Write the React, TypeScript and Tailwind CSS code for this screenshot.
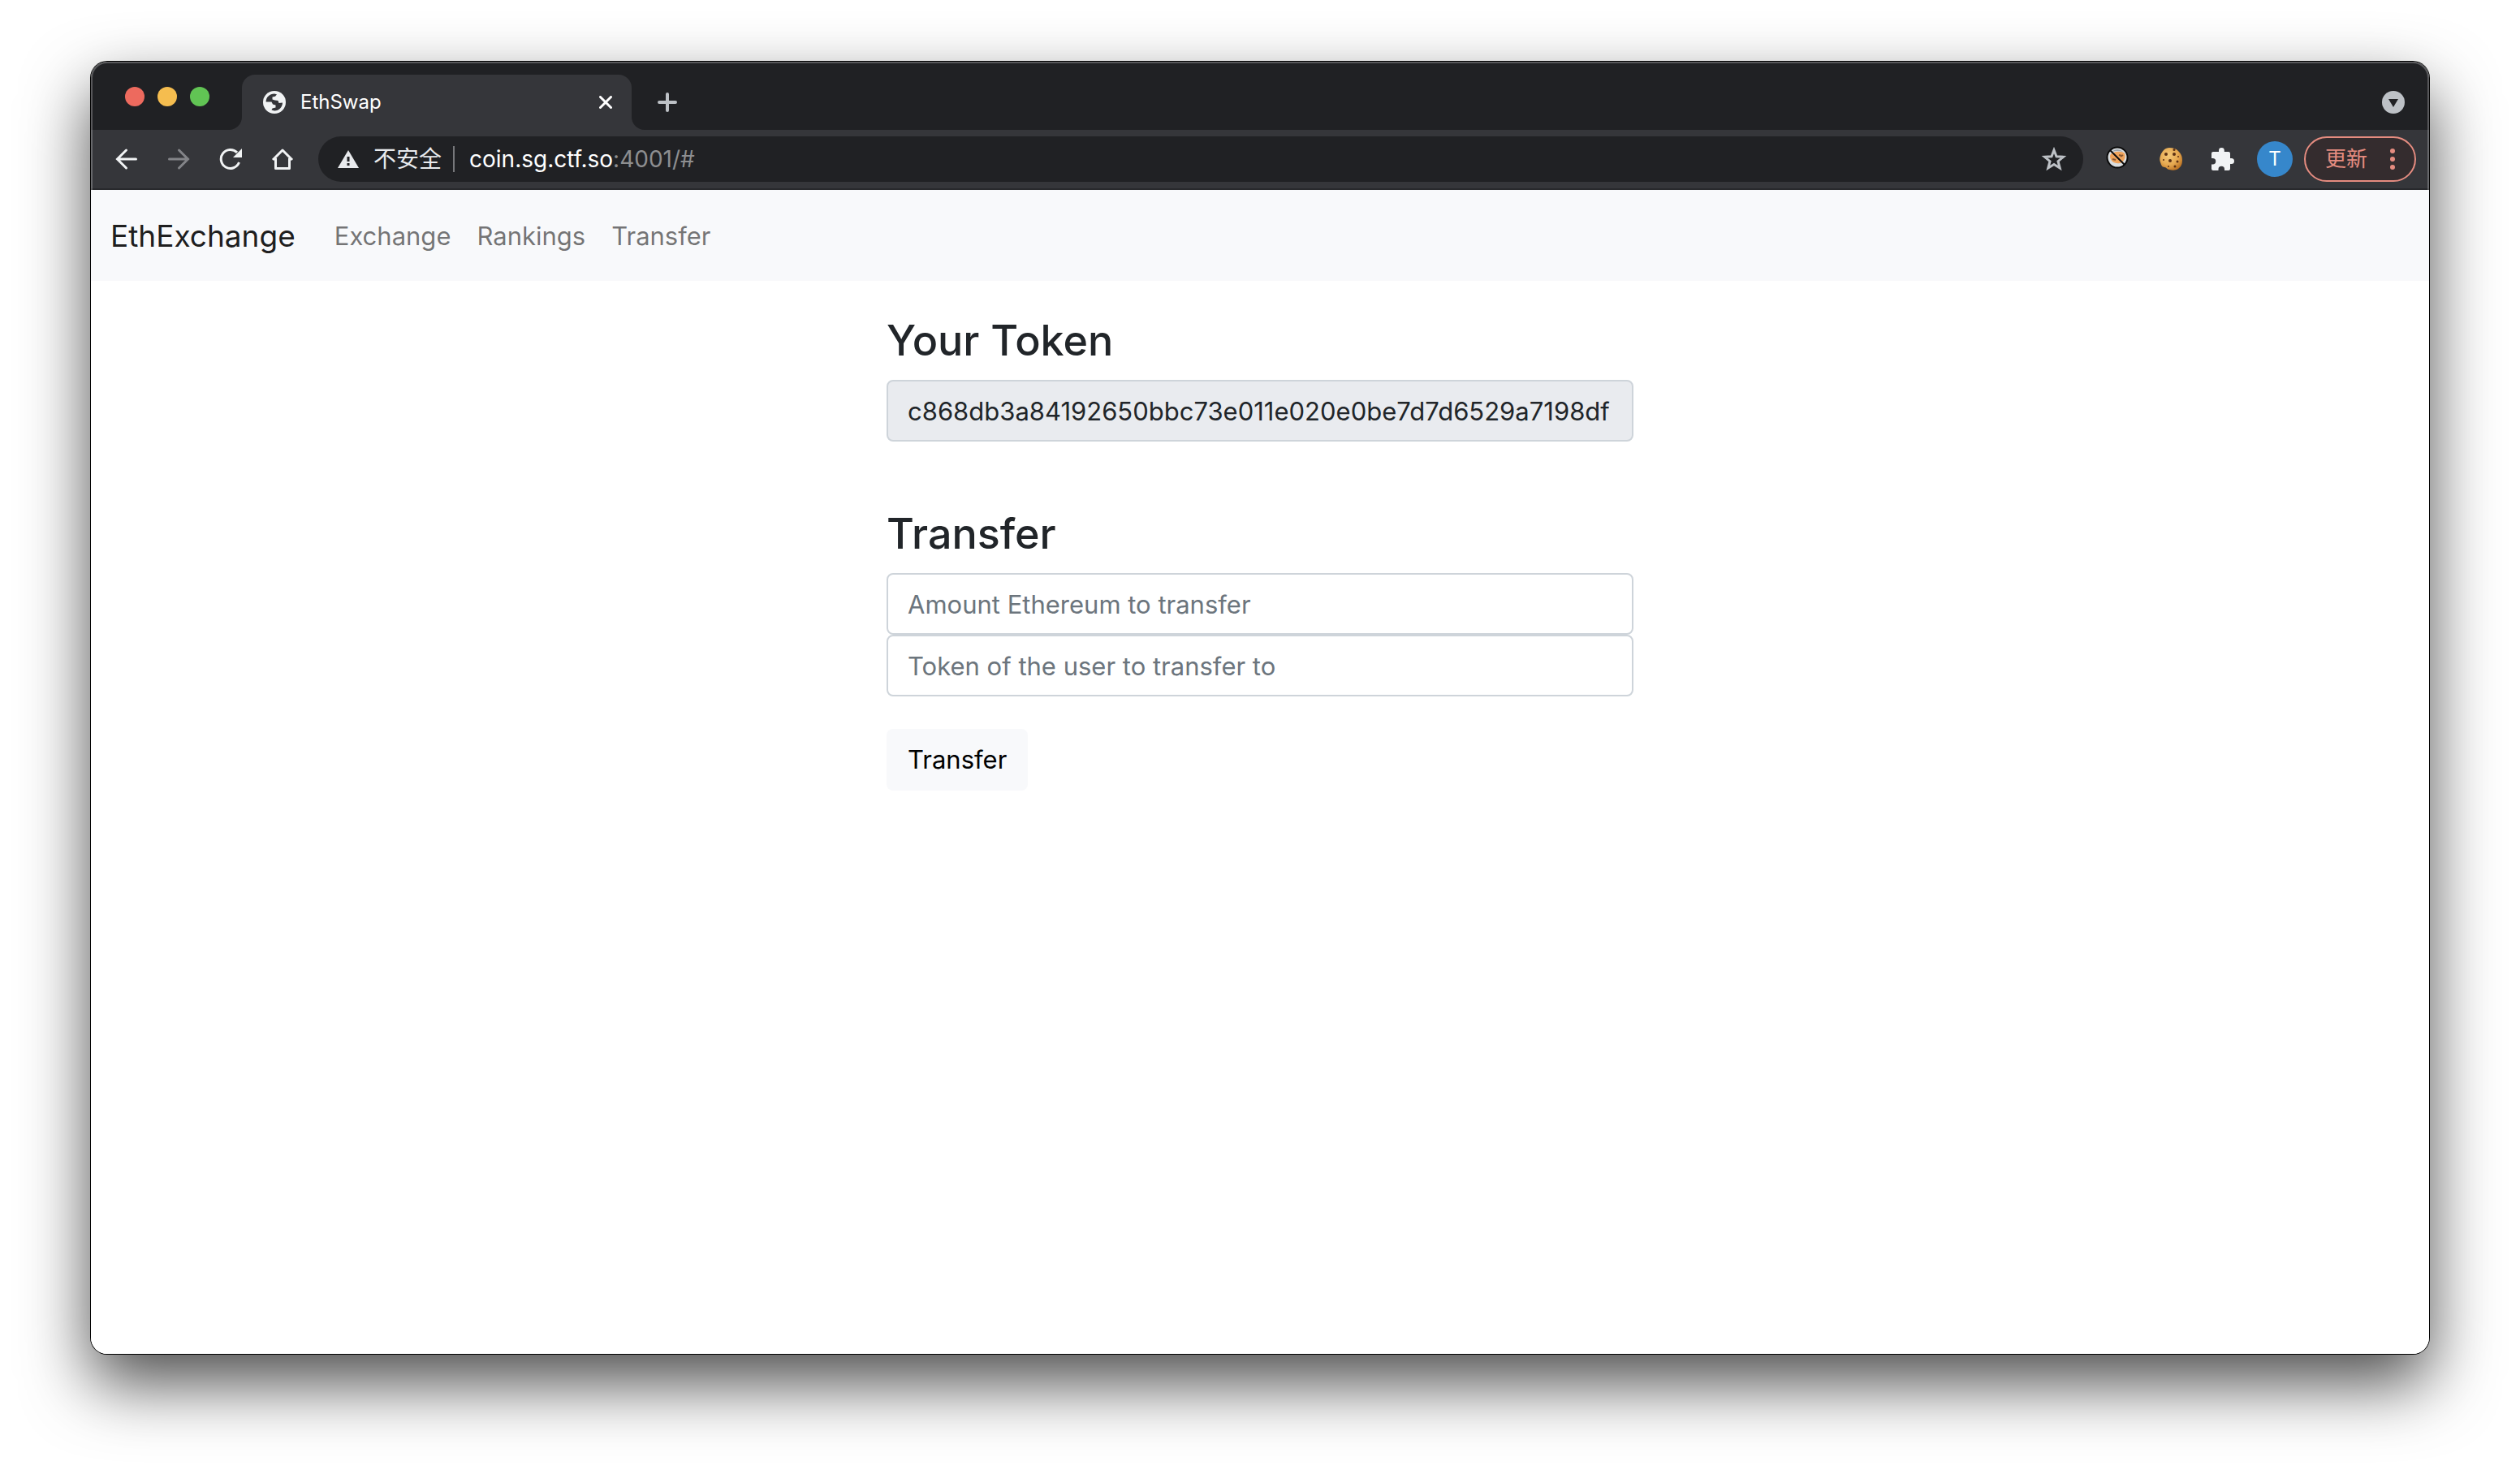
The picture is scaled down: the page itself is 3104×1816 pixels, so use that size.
import type { ReactNode } from "react";

const ui = "font-['Inter','Noto_Sans_CJK_SC',sans-serif]";

function IconButton({ label, className = "", children }: { label: string; className?: string; children: ReactNode }) {
  return (
    <button aria-label={label} className={`flex shrink-0 items-center justify-center ${className}`}>
      {children}
    </button>
  );
}

function Globe() {
  return (
    <svg viewBox="0 0 28 28" className="size-7 shrink-0" aria-hidden="true">
      <circle cx="14" cy="14" r="14" fill="#f1f3f4" />
      <path
        d="M3.600 13.500C3.600 8 8 3.600 14 3.600L17 4.200L15 6.800L11.500 7.500V10.500L14.500 11.500L18.500 12L19.500 15L24 14.500C24 20 19.800 24.400 14 24.400L10.500 23.600L11.500 21.500L15.500 20.500V17.500L12 16.500L10.500 13.500Z"
        fill="#35363a"
      />
    </svg>
  );
}

function TabStrip() {
  return (
    <div className="flex h-[84px] items-end bg-[#202124]">
      <div className="flex h-full items-center gap-4 pt-[2px] pr-6 pl-[42px]">
        <button aria-label="Close window" className="size-6 rounded-full bg-[#ed6a5e]" />
        <button aria-label="Minimize window" className="size-6 rounded-full bg-[#f5bd4f]" />
        <button aria-label="Zoom window" className="size-6 rounded-full bg-[#61c454]" />
      </div>
      <svg viewBox="0 0 16 16" className="size-4 shrink-0 text-[#35363a]" aria-hidden="true">
        <path d="M16 0A16 16 0 0 1 0 16H16Z" fill="currentColor" />
      </svg>
      <div className="flex h-[68px] w-[480px] items-center rounded-t-2xl bg-[#35363a] pr-4 pl-[26px]">
        <Globe />
        <span className="ml-[18px] grow text-[24px] leading-8 text-white">EthSwap</span>
        <IconButton label="Close tab" className="size-8">
          <svg viewBox="0 0 16 16" className="size-4" fill="none" stroke="#fff" strokeWidth="3" strokeLinecap="round" aria-hidden="true">
            <path d="M1.500 1.500L14.500 14.500M14.500 1.500L1.500 14.500" />
          </svg>
        </IconButton>
      </div>
      <svg viewBox="0 0 16 16" className="size-4 shrink-0 text-[#35363a]" aria-hidden="true">
        <path d="M0 0A16 16 0 0 0 16 16H0Z" fill="currentColor" />
      </svg>
      <IconButton label="New tab" className="ml-2 h-[68px] w-10">
        <svg viewBox="0 0 24 24" className="size-6" fill="none" stroke="#bdc1c6" strokeWidth="4" strokeLinecap="round" aria-hidden="true">
          <path d="M12 2V22M2 12H22" />
        </svg>
      </IconButton>
      <IconButton label="Search tabs" className="mr-[30px] ml-auto h-[68px] w-7">
        <svg viewBox="0 0 28 28" className="size-7" aria-hidden="true">
          <circle cx="14" cy="14" r="14" fill="#bdc1c6" />
          <path d="M8 10H20L14 20Z" fill="#202124" />
        </svg>
      </IconButton>
    </div>
  );
}

function BlockedIcon() {
  return (
    <svg viewBox="0 0 28 28" className="size-7" aria-hidden="true">
      <circle cx="14" cy="14" r="12.500" fill="#d9dde0" stroke="#0b0b0b" strokeWidth="2" />
      <path d="M5 12C6 7 19 5 23 9C25 14 22 20 17 21C11 22 5 19 5 12Z" fill="#f0a45c" />
      <path d="M7 7Q14 1 21 7Q14 5 7 7Z" fill="#9aa3ab" />
      <path d="M8 16L12 17M16 11L20 12M18 13L21 11" stroke="#8a5a33" strokeWidth="2" />
      <path d="M5 5L23 23" stroke="#0b0b0b" strokeWidth="2" />
    </svg>
  );
}

function CookieIcon() {
  return (
    <svg viewBox="0 0 28 28" className="size-7" aria-hidden="true">
      <defs>
        <radialGradient id="dough" cx="0.4" cy="0.35" r="0.7">
          <stop offset="0" stopColor="#f3c877" />
          <stop offset="0.600" stopColor="#e5a850" />
          <stop offset="1" stopColor="#bd7424" />
        </radialGradient>
      </defs>
      <path d="M12 0C17 0 20 1 23 4C27 8 28 11 28 15C28 20 27 23 23 26C20 28 16 28 12 27C9 27 9 24 6 24C3 24 2 21 1 18C0 15 0 13 1 10C3 4 7 0 12 0Z" fill="url(#dough)" />
      <g fill="#5c3013">
        <circle cx="8" cy="8" r="2" />
        <circle cx="18" cy="8" r="2" />
        <circle cx="13" cy="16" r="2" />
        <circle cx="22" cy="17" r="1.500" />
        <circle cx="23" cy="11" r="1" />
        <circle cx="19" cy="23" r="1.500" />
        <circle cx="5" cy="15" r="1" />
        <circle cx="11" cy="23" r="1" />
        <circle cx="18" cy="2.500" r="1.500" />
      </g>
    </svg>
  );
}

function Toolbar() {
  return (
    <div className="flex h-[74px] items-center border-b-2 border-[#28292c] bg-[#35363a] pr-4 pl-5">
      <div className="flex items-center gap-4 text-[#f1f3f4]">
        <IconButton label="Back" className="size-12">
          <svg viewBox="0 0 28 28" className="size-7" fill="none" stroke="currentColor" strokeWidth="3" strokeLinecap="round" aria-hidden="true">
            <path d="M25.500 14H3M13.500 3L2.500 14L13.500 25" />
          </svg>
        </IconButton>
        <IconButton label="Forward" className="size-12 text-[#838488]">
          <svg viewBox="0 0 28 28" className="size-7" fill="none" stroke="currentColor" strokeWidth="3" strokeLinecap="round" aria-hidden="true">
            <path d="M2.500 14H25M14.500 3L25.500 14L14.500 25" />
          </svg>
        </IconButton>
        <IconButton label="Reload" className="size-12">
          <svg viewBox="0 0 28 28" className="size-7" aria-hidden="true">
            <path d="M24.500 18A11.500 11.500 0 1 1 22 5.900" fill="none" stroke="currentColor" strokeWidth="3" />
            <path d="M28 1V12H17Z" fill="currentColor" />
          </svg>
        </IconButton>
        <IconButton label="Home" className="size-12">
          <svg viewBox="0 0 28 28" className="size-7" fill="none" stroke="currentColor" strokeWidth="3" strokeLinejoin="round" aria-hidden="true">
            <path d="M2 15L14 3L26 15M5.500 13V25.500H22.500V13" />
          </svg>
        </IconButton>
      </div>
      <div className="ml-5 flex h-14 min-w-0 grow items-center rounded-full bg-[#202124] pr-5 pl-6">
        <svg viewBox="0 0 26 22" className="h-[22px] w-[26px] shrink-0" aria-hidden="true">
          <path d="M13 0L26 22H0Z" fill="#e8eaed" />
          <path d="M11.500 8H14.500V14H11.500ZM11.500 16H14.500V19H11.500Z" fill="#202124" />
        </svg>
        <span className="ml-[18px] text-[28px] leading-9 text-[#e8eaed]">不安全</span>
        <span className="ml-[14px] h-8 w-[2px] bg-[#77787b]" />
        <a href="#" className="ml-[18px] grow text-[28px] leading-9 text-white">
          coin.sg.ctf.so<span className="text-[#8d8e90]">:4001/#</span>
        </a>
        <IconButton label="Bookmark this tab" className="size-8">
          <svg viewBox="0 0 32 32" className="size-8" fill="none" stroke="#bdc1c6" strokeWidth="3" aria-hidden="true">
            <path d="M16 5L19 12.700L27.500 13.300L21 18.700L23.200 27L16 22.500L8.800 27L11 18.700L4.500 13.300L13 12.700Z" />
          </svg>
        </IconButton>
      </div>
      <div className="ml-4 flex items-center gap-[14px]">
        <div className="mr-1 flex items-center gap-4">
          <IconButton label="Blocker extension" className="h-12 w-[52px] pb-1"><BlockedIcon /></IconButton>
          <IconButton label="Cookie extension" className="size-12"><CookieIcon /></IconButton>
          <IconButton label="Extensions" className="size-12">
            <svg viewBox="0 0 28 28" className="size-7" fill="#f1f3f4" aria-hidden="true">
              <path d="M2 5H9V3.500A3.400 3.400 0 0 1 15.800 3.500V5H21A2 2 0 0 1 23 7V13H24.500A3.400 3.400 0 0 1 24.500 20H23V26A2 2 0 0 1 21 28H16V26.500A3.600 3.600 0 0 0 8.500 26.500V28H2A2 2 0 0 1 0 26V20.500H1.500A3.600 3.600 0 0 0 1.500 13H0V7A2 2 0 0 1 2 5Z" />
            </svg>
          </IconButton>
        </div>
        <button aria-label="Profile" className="size-11 rounded-full bg-[#3687cb] text-[24px] leading-[44px] text-white">T</button>
        <button className="flex h-14 items-center rounded-full border-2 border-[#e58c80] bg-[#342c2e] px-6 text-[26px] leading-9 text-[#e58c80]">
          更新
          <svg viewBox="0 0 6 26" className="ml-7 h-[26px] w-[6px]" fill="currentColor" aria-hidden="true">
            <circle cx="3" cy="3" r="3" />
            <circle cx="3" cy="13" r="3" />
            <circle cx="3" cy="23" r="3" />
          </svg>
        </button>
      </div>
    </div>
  );
}

const field = "block h-[76px] w-full rounded-lg border-2 border-[#ced4da] px-6 text-[31px] text-[#212529] placeholder:text-[#6c757d] placeholder:opacity-100";
const heading = "mb-[14px] text-[52px] leading-[68px] font-medium";

function Page() {
  return (
    <div className="grow bg-white">
      <nav className="flex h-28 items-center bg-[#f8f9fb] px-6 pt-[2px]">
        <a href="#" className="mr-8 text-[37px] leading-[60px] text-black/90">EthExchange</a>
        {["Exchange", "Rankings", "Transfer"].map((item) => (
          <a key={item} href="#" className="px-4 text-[31px] leading-[48px] text-black/55">{item}</a>
        ))}
      </nav>
      <main className="mx-auto flex w-full max-w-[920px] flex-col pt-10 text-[#212529]">
        <h2 className={heading}><label htmlFor="token">Your Token</label></h2>
        <input id="token" readOnly className={`${field} bg-[#e9ebef]`} value="c868db3a84192650bbc73e011e020e0be7d7d6529a7198df" />
        <h2 className={`mt-20 ${heading}`}>Transfer</h2>
        <input aria-label="Amount" className={field} placeholder="Amount Ethereum to transfer" />
        <input aria-label="Recipient token" className={field} placeholder="Token of the user to transfer to" />
        <button className="mt-10 h-[76px] self-start rounded-lg bg-[#f8f9fb] px-[26px] text-[31px] text-black">Transfer</button>
      </main>
    </div>
  );
}

export default function App() {
  return (
    <div className={`flex min-h-screen flex-col overflow-hidden bg-white px-28 pt-[76px] pb-[148px] ${ui}`}>
      <div className="flex grow flex-col rounded-[20px] shadow-[0_0_0_1px_#000,0_36px_82px_rgba(0,0,0,0.7)]">
        <div className="flex grow flex-col overflow-hidden rounded-[20px]">
          <div className="relative">
            <TabStrip />
            <Toolbar />
            <div className="pointer-events-none absolute inset-0 rounded-t-[20px] border-x-2 border-t-2 border-white/25" />
          </div>
          <Page />
        </div>
      </div>
    </div>
  );
}
